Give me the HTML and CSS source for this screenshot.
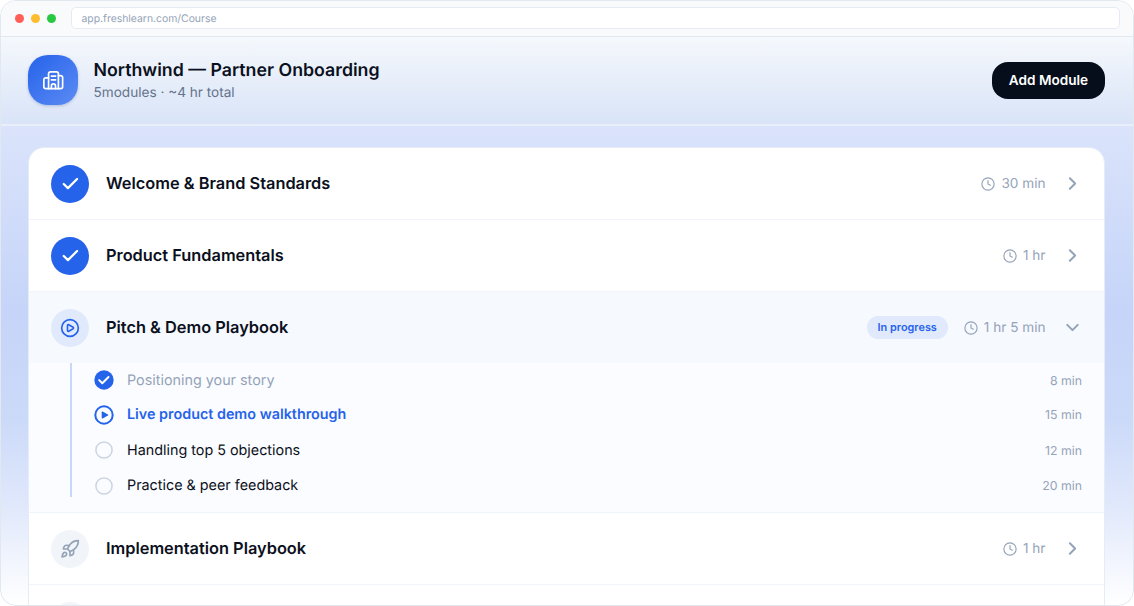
FILE: index.html
```
<!DOCTYPE html>
<html lang="en">
<head>
<meta charset="utf-8">
<title>Partner Onboarding</title>
<link rel="stylesheet" href="styles.css">
</head>
<body>
<svg class="defs" aria-hidden="true">
  <symbol id="clock" viewBox="0 0 24 24"><circle cx="12" cy="12" r="10.5"/><path d="M12 6v6l4 2"/></symbol>
  <symbol id="chevron" viewBox="0 0 24 24"><path d="m9 18 6-6-6-6"/></symbol>
  <symbol id="check" viewBox="0 0 24 24"><path d="M20.5 6 9.5 17l-5-5"/></symbol>
  <symbol id="rocket" viewBox="0 0 24 24"><path d="M4.5 16.5c-1.5 1.26-2 5-2 5s3.74-.5 5-2c.71-.84.7-2.13-.09-2.91a2.18 2.18 0 0 0-2.91-.09z"/><path d="m12 15-3-3a22 22 0 0 1 2-3.95A12.88 12.88 0 0 1 22 2c0 2.72-.78 7.5-6 11a22.35 22.35 0 0 1-4 2z"/><path d="M9 12H4s.55-3.03 2-4c1.62-1.08 5 0 5 0"/><path d="M12 15v5s3.03-.55 4-2c1.08-1.62 0-5 0-5"/></symbol>
</svg>
<div class="window">
  <div class="chrome">
    <div class="lights"><i class="red"></i><i class="amber"></i><i class="green"></i></div>
    <div class="address">app.freshlearn.com/Course</div>
  </div>
  <header class="header">
    <div class="logo"><svg class="icon" viewBox="0 0 24 24"><path d="M7 21V5a2 2 0 0 1 2-2h6.5a2 2 0 0 1 2 2v16"/><path d="M7 9.500H4a2 2 0 0 0-2 2V19a2 2 0 0 0 2 2h16a2 2 0 0 0 2-2V9a2 2 0 0 0-2-2h-2.500"/><path d="M10 7.500h4.500M10 11.500h4.500M10 21v-3a2.200 2.200 0 0 1 4.400 0v3"/></svg></div>
    <div class="heading">
      <h1>Northwind — Partner Onboarding</h1>
      <p>5modules · ~4 hr total</p>
    </div>
    <button class="add">Add Module</button>
  </header>
  <main class="content">
    <div class="card">
      <div class="row">
        <span class="badge done"><svg class="icon"><use href="#check"/></svg></span>
        <h2>Welcome &amp; Brand Standards</h2>
        <span class="time"><svg class="icon"><use href="#clock"/></svg>30 min</span>
        <svg class="icon chevron"><use href="#chevron"/></svg>
      </div>
      <div class="row">
        <span class="badge done"><svg class="icon"><use href="#check"/></svg></span>
        <h2>Product Fundamentals</h2>
        <span class="time"><svg class="icon"><use href="#clock"/></svg>1 hr</span>
        <svg class="icon chevron"><use href="#chevron"/></svg>
      </div>
      <div class="row open">
        <span class="badge active"><svg class="icon" viewBox="0 0 24 24"><circle cx="12" cy="12" r="10"/><path d="M9 9a1 1 0 0 1 1.5-.85l5.200 3a1 1 0 0 1 0 1.700l-5.200 3A1 1 0 0 1 9 15z"/></svg></span>
        <h2>Pitch &amp; Demo Playbook</h2>
        <span class="pill">In progress</span>
        <span class="time"><svg class="icon"><use href="#clock"/></svg>1 hr 5 min</span>
        <svg class="icon chevron down"><use href="#chevron"/></svg>
      </div>
      <div class="lessons">
        <ul>
          <li class="complete"><svg viewBox="0 0 20 20"><circle class="fill" cx="10" cy="10" r="9.7"/><path class="tick" d="m5.2 10.1 3.1 3.1 6.2-6.2"/></svg><span>Positioning your story</span><time>8 min</time></li>
          <li class="current"><svg viewBox="0 0 20 20"><circle class="ring" cx="10" cy="10" r="8.7"/><path class="fill" d="M7.7 7.2q0-1.1 1-.6l5.2 2.8q.9.6 0 1.2l-5.2 2.8q-1 .5-1-.6z"/></svg><span>Live product demo walkthrough</span><time>15 min</time></li>
          <li><svg viewBox="0 0 20 20"><circle class="empty" cx="10" cy="10" r="8.1"/></svg><span>Handling top 5 objections</span><time>12 min</time></li>
          <li><svg viewBox="0 0 20 20"><circle class="empty" cx="10" cy="10" r="8.1"/></svg><span>Practice &amp; peer feedback</span><time>20 min</time></li>
        </ul>
      </div>
      <div class="row">
        <span class="badge"><svg class="icon"><use href="#rocket"/></svg></span>
        <h2>Implementation Playbook</h2>
        <span class="time"><svg class="icon"><use href="#clock"/></svg>1 hr</span>
        <svg class="icon chevron"><use href="#chevron"/></svg>
      </div>
      <div class="row"><span class="badge"></span></div>
    </div>
  </main>
</div>
</body>
</html>
```

FILE: styles.css
```
* { box-sizing: border-box; }
body { margin: 0; height: 606px; overflow: hidden; background: #fff; font-family: Inter, "Liberation Sans", sans-serif; color: #0b1020; text-rendering: geometricPrecision; }
h1, h2, p, ul { margin: 0; padding: 0; }
.defs { display: none; }
.icon { fill: none; stroke: currentColor; stroke-width: 2; stroke-linecap: round; stroke-linejoin: round; flex: none; }

.window { height: 606px; display: flex; flex-direction: column; overflow: hidden; border: 1px solid #e2e8f0; border-radius: 16px; background: linear-gradient(180deg, #f8fafc 36px, #dae3fb 128px, #c5d4f8 310px, #ccdaf9 420px, #e0e8fb 505px, #fff 604px); }
.chrome { flex: none; height: 36px; display: flex; align-items: center; padding: 0 13px 0 14px; background: #f8fafc; border-bottom: 1px solid #e2e8f0; }
.lights { display: flex; gap: 7px; width: 56px; }
.lights i { width: 9px; height: 9px; border-radius: 50%; }
.red { background: #ff5f57; }
.amber { background: #febc2e; }
.green { background: #28c840; }
.address { flex: 1; height: 22px; margin-bottom: 1px; padding-left: 9.5px; line-height: 22px; font-size: 10.4px; color: #94a3b8; background: #fff; border: 1px solid #e6ebf3; border-radius: 5px; }

.header { flex: none; height: 89px; display: flex; align-items: center; padding: 0 28px 0 27px; border-bottom: 2px solid #e8eefa; background: linear-gradient(180deg, #f5f8fc, #d9e4f8); }
.logo { width: 49.5px; height: 49.5px; margin-bottom: 1px; display: grid; place-items: center; border-radius: 20px; background: linear-gradient(135deg, #2563eb, #5c8bf3); box-shadow: 0 1px 3px rgba(37, 60, 120, .25); color: #fff; }
.logo .icon { width: 22.5px; height: 22.5px; stroke-width: 1.8; }
.heading { flex: 1; padding-left: 16px; }
h1 { font-size: 17.75px; line-height: 25px; font-weight: 600; }
.heading p { font-size: 13.6px; line-height: 21px; color: #64748b; }
.add { width: 113px; height: 37px; padding: 0 0 1px; border: 0; border-radius: 16px; background: #060d1b; color: #fff; font: 600 13.6px Inter, sans-serif; }

.content { flex: none; padding: 21px 28px 0 27px; }
.card { height: 480px; overflow: hidden; border: 1px solid #e6ecf6; border-radius: 16px 16px 0 0; background: #fff; }
.row { height: 72px; display: flex; align-items: center; padding: 0 22px; border-bottom: 1px solid #f1f5f9; }
.row.open { height: 71px; background: #f6f9fe; border-bottom: 0; }
.badge { width: 38px; height: 38px; flex: none; display: grid; place-items: center; border-radius: 50%; background: #f1f5f9; color: #94a3b8; }
.badge.done { background: #2563eb; color: #fff; }
.badge.active { background: #e1eafc; color: #2563eb; }
.badge .icon { width: 20px; height: 20px; }
.done .icon { stroke-width: 2.7; }
h2 { flex: 1; padding: 0 0 1px 17px; font-size: 16.35px; line-height: 24px; font-weight: 600; }
.time { display: flex; align-items: center; gap: 6px; font-size: 13.6px; color: #94a3b8; }
.time .icon { width: 14px; height: 14px; }
.chevron { width: 21px; height: 21px; margin: 0 -1px 0 16.5px; color: #94a3b8; stroke-width: 2.3; }
.down { transform: rotate(90deg); }
.pill { height: 23px; padding: 0 11px; margin-right: 16px; border-radius: 12px; background: #e1eafc; color: #2563eb; font-size: 10.9px; line-height: 22px; font-weight: 600; }
.lessons { height: 150px; padding: 0 22px 0 41px; background: #fbfcff; border-bottom: 1px solid #eff4fa; }
.lessons ul { height: 133.5px; list-style: none; border-left: 2px solid #c7d7f8; }
.lessons li { height: 35.5px; display: flex; align-items: center; padding-left: 21.5px; font-size: 14.35px; }
.lessons li:first-child { height: 34px; }
.lessons li svg { width: 20px; height: 20px; flex: none; margin-right: 13.5px; fill: none; }
.lessons li span { flex: 1; }
.lessons time { font-size: 12.3px; color: #94a3b8; }
.complete span { color: #94a3b8; }
.current span { color: #2563eb; font-weight: 600; }
.lessons .fill { fill: #2563eb; }
.tick { stroke: #fff; stroke-width: 2; stroke-linecap: round; stroke-linejoin: round; }
.ring { stroke: #2563eb; stroke-width: 2; }
.empty { stroke: #cbd5e1; stroke-width: 1.5; }
```
